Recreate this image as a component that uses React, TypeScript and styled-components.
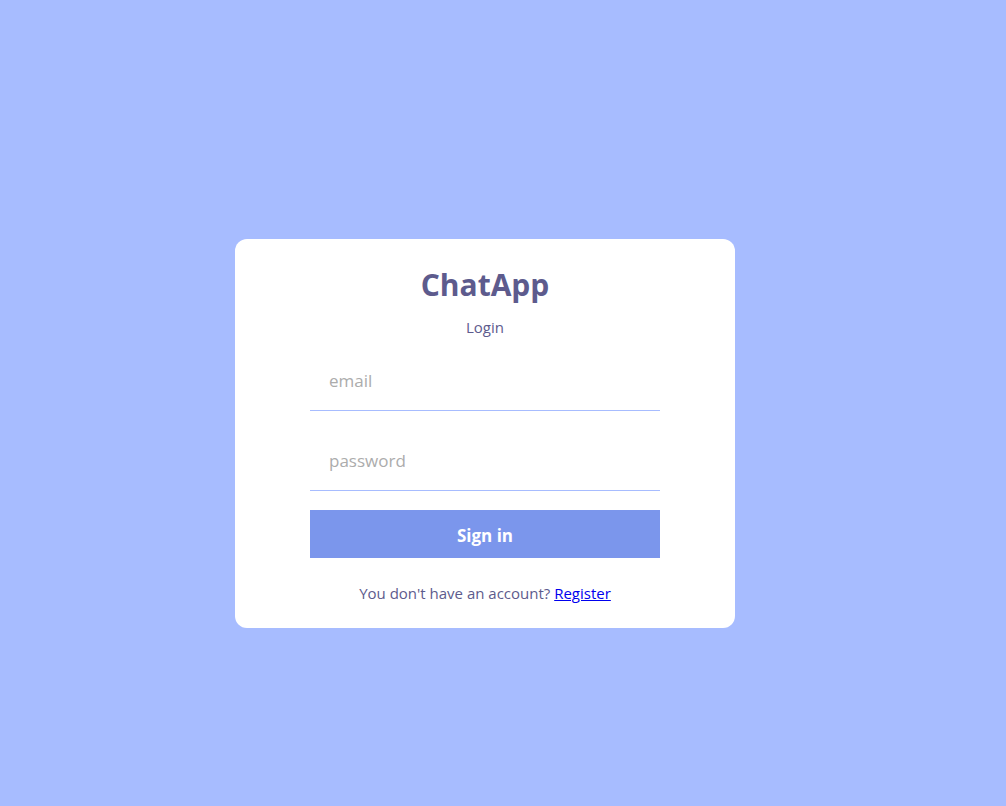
import React from "react";
import styled, { createGlobalStyle } from "styled-components";

const Global = createGlobalStyle`
  * { box-sizing: border-box; }
  html, body { margin: 0; padding: 0; }
  body { font-family: "Open Sans", "Noto Sans", sans-serif; }
`;

const FormContainer = styled.div`
  background: #a7bcff;
  height: 806px;
  padding: 60px 36px 0 0;
  display: flex;
  align-items: center;
  justify-content: center;
`;

const FormWrapper = styled.div`
  background: #ffffff;
  width: 500px;
  padding: 25px 75px;
  border-radius: 12px;
  display: flex;
  flex-direction: column;
  align-items: center;
  gap: 12.5px;
`;

const Logo = styled.span`
  color: #5d5b8d;
  font-weight: bold;
  font-size: 30px;
  line-height: 41px;
`;

const Title = styled.span`
  color: #5d5b8d;
  font-size: 15px;
  line-height: 20px;
`;

const Form = styled.form`
  display: flex;
  flex-direction: column;
  gap: 19px;
  width: 350px;
`;

const Input = styled.input`
  height: 61px;
  padding: 2px 19px 0;
  border: none;
  border-bottom: 1px solid #a7bcff;
  font-family: "Open Sans", sans-serif;
  font-size: 17px;
  outline: none;
  &::placeholder { color: #acacac; }
`;

const Button = styled.button`
  background: #7b96ec;
  color: #ffffff;
  height: 48px;
  padding: 3px 0 0;
  border: none;
  font-family: "Open Sans", sans-serif;
  font-weight: bold;
  font-size: 17px;
  cursor: pointer;
`;

const Footer = styled.p`
  color: #5d5b8d;
  font-size: 15px;
  line-height: 20px;
  margin: 12.5px 0 0;
  a { color: #0000ee; }
`;

export default function App() {
  return (
    <>
      <Global />
      <FormContainer>
        <FormWrapper>
          <Logo>ChatApp</Logo>
          <Title>Login</Title>
          <Form onSubmit={(e) => e.preventDefault()}>
            <Input type="email" placeholder="email" />
            <Input type="password" placeholder="password" />
            <Button>Sign in</Button>
          </Form>
          <Footer>
            You don't have an account? <a href="#">Register</a>
          </Footer>
        </FormWrapper>
      </FormContainer>
    </>
  );
}
